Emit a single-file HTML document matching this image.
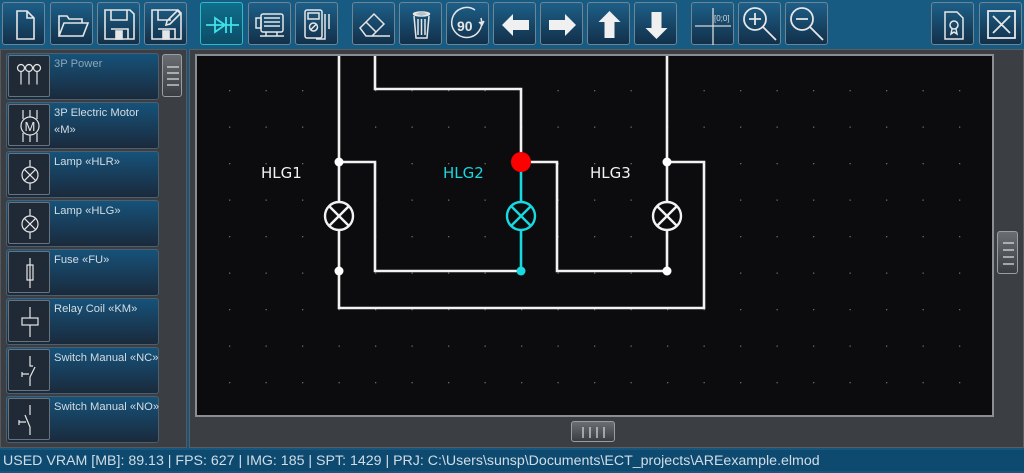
<!DOCTYPE html>
<html><head><meta charset="utf-8"><style>
*{margin:0;padding:0;box-sizing:border-box}
body{width:1024px;height:471px;overflow:hidden;background:#16557c;font-family:"DejaVu Sans","Liberation Sans",sans-serif;position:relative}
.tb{position:absolute;left:0;top:0;width:1024px;height:49px;background:#175a82}
.b{position:absolute;top:2px;width:43px;height:43px;border:1px solid #6f8594;border-radius:3px;background:linear-gradient(#1d5f88,#12304a)}
.b.act{background:linear-gradient(#0f6f8c,#0c4c66);border-color:#2bbcc8}
.b svg{position:absolute;left:0;top:0}
.lp{position:absolute;left:0;top:49px;width:187px;height:399px;background:#3b3e43;border:1px solid #55595f}
.it{position:absolute;left:6px;width:153px;height:47px;border:1px solid #4d5f6c;border-radius:3px;background:linear-gradient(#16527a,#1a2a3c)}
.ic{position:absolute;left:1px;top:1px;width:42px;height:42px;border:1px solid #6a737b;border-radius:2px;background:#202a36}
.it span{position:absolute;left:47px;top:2px;font-family:"Liberation Sans",sans-serif;font-size:11.2px;color:#d3dce2;line-height:17px;width:108px;white-space:nowrap}
.cp{position:absolute;left:189px;top:49px;width:835px;height:399px;background:#3b3e43;border:1px solid #5a5e63}
.cv{position:absolute;left:195px;top:54px;width:799px;height:363px;background:#0c0c0e;border:2px solid #8a8e93}
.th{position:absolute;border:1px solid #9a9ea3;border-radius:3px;background:linear-gradient(#6a6e73,#3a3d41)}
.st{position:absolute;left:0;top:450px;width:1024px;height:21px;background:#0e4a70;color:#d0dde6;font-family:"Liberation Sans",sans-serif;font-size:14.2px;line-height:23px;padding-left:3px;white-space:nowrap}
</style></head><body>
<div class="tb">
<div class="b" style="left:2px"><svg width="43" height="43" fill="none" stroke="#e6e6e6" stroke-width="1.6"><path d="M14 8h10l7 7v21H14z M24 8v7h7"/></svg></div>
<div class="b" style="left:50px"><svg width="43" height="43" fill="none" stroke="#e6e6e6" stroke-width="1.6"><path d="M8 33V13h8l2 3h13v4 M8 33l5-13h24l-5 13z"/></svg></div>
<div class="b" style="left:97px"><svg width="43" height="43" fill="none" stroke="#e6e6e6" stroke-width="1.6"><path d="M7 7h25l4 4v25H7z M13 7v10h16V7 M13 26h17v10H13"/><rect x="18" y="28" width="6" height="8" fill="#e6e6e6"/></svg></div>
<div class="b" style="left:144px"><svg width="43" height="43" fill="none" stroke="#e6e6e6" stroke-width="1.6"><path d="M7 7h25l4 4v25H7z M13 7v10h13 M13 26h17v10H13 M22 18l11-11 3 3-11 11-4 1z"/><rect x="18" y="28" width="6" height="8" fill="#e6e6e6"/></svg></div>
<div class="b act" style="left:200px"><svg width="43" height="43" fill="none" stroke="#3fe0e8" stroke-width="1.8"><path d="M5 22h33 M14 15v14l10-7z M25 14v16 M30 14v16"/></svg></div>
<div class="b" style="left:248px"><svg width="43" height="43" fill="none" stroke="#e6e6e6" stroke-width="1.5"><rect x="12" y="11" width="22" height="18" rx="2"/><path d="M7 15h5v10H7z M15 15h16 M15 19h16 M15 23h16 M11 33h24 M17 29v4 M28 29v4"/></svg></div>
<div class="b" style="left:295px"><svg width="43" height="43" fill="none" stroke="#e6e6e6" stroke-width="1.5"><rect x="9" y="7" width="17" height="28" rx="2"/><rect x="12" y="10" width="11" height="6"/><circle cx="17.5" cy="24" r="4"/><path d="M14.5 27l6-6 M29 11v9 M33 11v9 M29 20v16h-9 M33 20v6"/></svg></div>
<div class="b" style="left:352px"><svg width="43" height="43" fill="none" stroke="#e6e6e6" stroke-width="1.5"><path d="M7 25l14-14 10 10-12 12h-6z M13 19l10 10 M19 33h18"/></svg></div>
<div class="b" style="left:399px"><svg width="43" height="43" fill="none" stroke="#e6e6e6" stroke-width="1.5"><path d="M13 11h17 M14 13l2 22h11l2-22 M18 16v16 M21.5 16v16 M25 16v16"/><ellipse cx="21.5" cy="11" rx="8" ry="2"/></svg></div>
<div class="b" style="left:446px"><svg width="43" height="43" fill="none" stroke="#e6e6e6" stroke-width="1.5"><path d="M28 7a15 15 0 1 0 6 8"/><text x="10" y="28" font-size="14" fill="#e6e6e6" stroke="none" font-family="Liberation Sans" font-weight="bold">90</text><path d="M32 19l3 3 2-4" fill="#e6e6e6"/></svg></div>
<div class="b" style="left:493px"><svg width="43" height="43"><path d="M8 22l11-11v6h16v10H19v6z" fill="#f0f0f0"/></svg></div>
<div class="b" style="left:540px"><svg width="43" height="43"><path d="M35 22L24 11v6H8v10h16v6z" fill="#f0f0f0"/></svg></div>
<div class="b" style="left:587px"><svg width="43" height="43"><path d="M21.5 8l11 11h-6v16h-10V19h-6z" fill="#f0f0f0"/></svg></div>
<div class="b" style="left:634px"><svg width="43" height="43"><path d="M21.5 36l11-11h-6V9h-10v16h-6z" fill="#f0f0f0"/></svg></div>
<div class="b" style="left:691px"><svg width="43" height="43" fill="none" stroke="#d8d8d8" stroke-width="1.3"><path d="M21 5v37 M3 23h36"/><text x="22" y="18" font-size="8" fill="#d8d8d8" stroke="none" font-family="Liberation Sans">[0;0]</text></svg></div>
<div class="b" style="left:738px"><svg width="43" height="43" fill="none" stroke="#e6e6e6" stroke-width="1.8"><circle cx="16" cy="16" r="11"/><path d="M24 24l13 13 M10 16h12 M16 10v12"/></svg></div>
<div class="b" style="left:785px"><svg width="43" height="43" fill="none" stroke="#e6e6e6" stroke-width="1.8"><circle cx="16" cy="16" r="11"/><path d="M24 24l13 13 M10 16h12"/></svg></div>
<div class="b" style="left:931px"><svg width="43" height="43" fill="none" stroke="#e6e6e6" stroke-width="1.5"><path d="M13 9h12l6 6v21H13z"/><circle cx="22" cy="22" r="4"/><path d="M20 26l-1 5 3-2 3 2-1-5"/></svg></div>
<div class="b" style="left:979px"><svg width="43" height="43" fill="none" stroke="#e6e6e6" stroke-width="1.8"><rect x="8" y="8" width="27" height="27"/><path d="M13 13l17 17 M30 13L13 30"/></svg></div>
</div>

<div class="lp">
<div class="th" style="left:161px;top:4px;width:20px;height:43px"><svg width="20" height="43" stroke="#ddd" stroke-width="1.2"><path d="M4 12h12 M4 18h12 M4 24h12 M4 30h12"/></svg></div>
</div>
<div class="it" style="top:53px"><div class="ic"><svg width="42" height="42" fill="none" stroke="#e6e6e6" stroke-width="1.2"><circle cx="12" cy="12" r="3.5"/><circle cx="20" cy="12" r="3.5"/><circle cx="28" cy="12" r="3.5"/><path d="M12 15.5v13 M20 15.5v13 M28 15.5v13"/></svg></div><span style="color:#8fa5b5">3P Power</span></div>
<div class="it" style="top:102px"><div class="ic"><svg width="42" height="42" fill="none" stroke="#e6e6e6" stroke-width="1.2"><circle cx="21" cy="21" r="9"/><text x="15.5" y="26" font-size="13" fill="#e6e6e6" stroke="none" font-family="Liberation Sans">M</text><path d="M14 5v9 M21 5v7 M28 5v9 M14 28v9 M21 30v7 M28 28v9"/></svg></div><span>3P Electric Motor<br>«M»</span></div>
<div class="it" style="top:151px"><div class="ic"><svg width="42" height="42" fill="none" stroke="#e6e6e6" stroke-width="1.2"><circle cx="21" cy="21" r="8"/><path d="M15.3 15.3l11.4 11.4 M26.7 15.3L15.3 26.7 M21 6v7 M21 29v7"/></svg></div><span>Lamp «HLR»</span></div>
<div class="it" style="top:200px"><div class="ic"><svg width="42" height="42" fill="none" stroke="#e6e6e6" stroke-width="1.2"><circle cx="21" cy="21" r="8"/><path d="M15.3 15.3l11.4 11.4 M26.7 15.3L15.3 26.7 M21 6v7 M21 29v7"/></svg></div><span>Lamp «HLG»</span></div>
<div class="it" style="top:249px"><div class="ic"><svg width="42" height="42" fill="none" stroke="#e6e6e6" stroke-width="1.2"><rect x="18" y="13" width="6" height="15"/><path d="M21 6v30"/></svg></div><span>Fuse «FU»</span></div>
<div class="it" style="top:298px"><div class="ic"><svg width="42" height="42" fill="none" stroke="#e6e6e6" stroke-width="1.2"><rect x="13" y="17" width="16" height="7"/><path d="M21 6v11 M21 24v12"/></svg></div><span>Relay Coil «KM»</span></div>
<div class="it" style="top:347px"><div class="ic"><svg width="42" height="42" fill="none" stroke="#e6e6e6" stroke-width="1.2"><path d="M21 6v10h3 M26 17l-5 10v9 M13 22v5 M13 24h7"/></svg></div><span>Switch Manual «NC»</span></div>
<div class="it" style="top:396px"><div class="ic"><svg width="42" height="42" fill="none" stroke="#e6e6e6" stroke-width="1.2"><path d="M21 6v10 M16 16l5 12v8 M10 21v5 M10 23h7"/></svg></div><span>Switch Manual «NO»</span></div>

<div class="cp">
<div class="th" style="left:807px;top:181px;width:21px;height:43px"><svg width="21" height="43" stroke="#ddd" stroke-width="1.2"><path d="M5 11h11 M5 18h11 M5 25h11 M5 32h11"/></svg></div>
<div class="th" style="left:381px;top:371px;width:44px;height:21px"><svg width="44" height="21" stroke="#ddd" stroke-width="1.2"><path d="M11 5v11 M18 5v11 M25 5v11 M32 5v11"/></svg></div>
</div>
<div class="cv"></div>
<svg style="position:absolute;left:0;top:0" width="1024" height="471">
<defs><pattern id="g" x="229" y="90" width="36.5" height="36.5" patternUnits="userSpaceOnUse"><rect width="1.3" height="1.3" fill="#6a6a6a"/></pattern>
<clipPath id="c"><rect x="197" y="56" width="795" height="359"/></clipPath></defs>
<g clip-path="url(#c)">
<rect x="197" y="56" width="795" height="359" fill="url(#g)"/>
<g fill="none" stroke="#f2f2f2" stroke-width="2.6">
<path d="M339 54V308H704V162H667 M667 54V271H557V162H521 M339 162H375V271H521 M375 54V89H521V162"/>
</g>
<path d="M521 162V271" stroke="#18d8e0" stroke-width="2.6"/>
<g fill="#0c0c0e" stroke="#f2f2f2" stroke-width="2.4">
<circle cx="339" cy="216" r="14"/><circle cx="667" cy="216" r="14"/></g>
<circle cx="521" cy="216" r="14" fill="#0c0c0e" stroke="#18d8e0" stroke-width="2.4"/>
<g stroke="#f2f2f2" stroke-width="2.4"><path d="M329 206l20 20M349 206l-20 20M657 206l20 20M677 206l-20 20"/></g>
<path d="M511 206l20 20M531 206l-20 20" stroke="#18d8e0" stroke-width="2.4"/>
<g fill="#fff"><circle cx="339" cy="162" r="4.5"/><circle cx="339" cy="271" r="4.5"/><circle cx="667" cy="162" r="4.5"/><circle cx="667" cy="271" r="4.5"/></g>
<circle cx="521" cy="271" r="4.5" fill="#18d8e0"/>
<circle cx="521" cy="162" r="10" fill="#f00"/>
<g font-family="DejaVu Sans,Liberation Sans,sans-serif" font-size="15">
<text x="261" y="178" fill="#f2f2f2">HLG1</text>
<text x="443" y="178" fill="#18d8e0">HLG2</text>
<text x="590" y="178" fill="#f2f2f2">HLG3</text></g>
</g>
</svg>
<div class="st">USED VRAM [MB]: 89.13 | FPS: 627 | IMG: 185 | SPT: 1429 | PRJ: C:\Users\sunsp\Documents\ECT_projects\AREexample.elmod</div>
</body></html>
